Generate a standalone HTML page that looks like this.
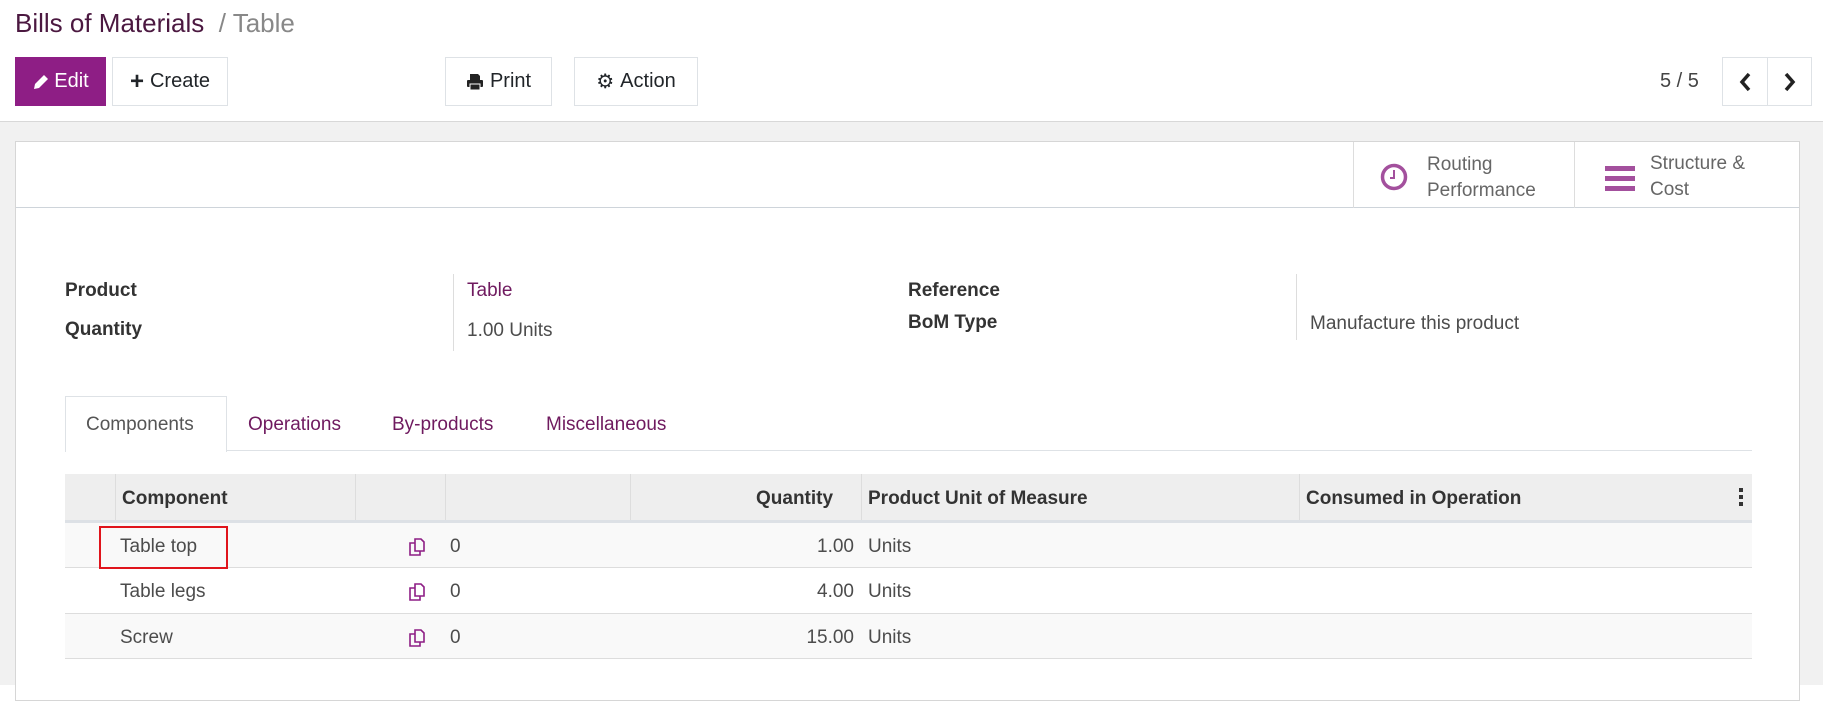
<!DOCTYPE html>
<html><head><meta charset="utf-8"><style>
*{box-sizing:border-box;margin:0;padding:0}
body{width:1823px;height:685px;overflow:hidden;background:#fff;font-family:"Liberation Sans",sans-serif;color:#4c4c4c;font-size:19px;position:relative}
.a{position:absolute}
.btn{position:absolute;top:57px;height:49px;border:1px solid #dee2e6;background:#fff;color:#212529;display:flex;align-items:center;justify-content:center;font-size:20px;gap:6px}
.gray{position:absolute;left:0;top:121px;width:1823px;height:564px;background:#f1f1f1;border-top:1px solid #d8d8d8}
.card{position:absolute;left:15px;top:141px;width:1785px;height:560px;background:#fff;border:1px solid #d6d6d6}
.lbl{font-weight:bold;color:#333}
.purple{color:#6f1a5f}
.q{position:absolute;width:100px;text-align:right;left:738px}
</style></head><body>
<div class="a" style="left:15px;top:8px;font-size:26px;color:#4b1840">Bills of Materials <span style="color:#888">&nbsp;/ Table</span></div>
<div class="btn" style="left:15px;width:91px;background:#8e1e85;border-color:#8e1e85;color:#fff"><svg width="16" height="18"><path d="M2 16l1-5 9-9 4 4-9 9z" fill="#fff"/></svg>Edit</div>
<div class="btn" style="left:112px;width:116px"><b style="font-size:24px">+</b>Create</div>
<div class="btn" style="left:445px;width:107px"><svg width="18" height="18"><path d="M4 1h8l2 2v4H4z" fill="#222"/><rect x="1" y="7" width="16" height="7" rx="1" fill="#222"/><rect x="4" y="11" width="10" height="6" fill="#222" stroke="#fff" stroke-width="1"/></svg>Print</div>
<div class="btn" style="left:574px;width:124px"><span>⚙</span>Action</div>
<div class="a" style="left:1660px;top:70px;font-size:20px;color:#444">5 / 5</div>
<div class="btn" style="left:1722px;width:46px"><svg width="14" height="20"><path d="M11 2L4 10l7 8" fill="none" stroke="#222" stroke-width="3.5"/></svg></div>
<div class="btn" style="left:1767px;width:45px"><svg width="14" height="20"><path d="M3 2l7 8-7 8" fill="none" stroke="#222" stroke-width="3.5"/></svg></div>
<div class="gray"></div>
<div class="card">
 <div class="a" style="left:0;top:0;width:1783px;height:66px;border-bottom:1px solid #ced4da"></div>
 <div class="a" style="left:1337px;top:0;width:222px;height:66px;border-left:1px solid #ddd;border-right:1px solid #ddd"></div>
 <svg class="a" style="left:1364px;top:21px" width="28" height="28"><circle cx="14" cy="14" r="11.5" fill="none" stroke="#a3509d" stroke-width="3.5"/><path d="M14 7v8h-4" fill="none" stroke="#a3509d" stroke-width="2"/></svg>
 <div class="a" style="left:1411px;top:10px;font-size:19px;line-height:26px;color:#666">Routing<br>Performance</div>
 <svg class="a" style="left:1589px;top:24px" width="30" height="26"><rect y="0" width="30" height="5" fill="#a3509d"/><rect y="10" width="30" height="5" fill="#a3509d"/><rect y="20" width="30" height="5" fill="#a3509d"/></svg>
 <div class="a" style="left:1634px;top:9px;font-size:19px;line-height:26px;color:#666">Structure &amp;<br>Cost</div>

 <div class="a lbl" style="left:49px;top:138px">Product</div>
 <div class="a lbl" style="left:49px;top:177px">Quantity</div>
 <div class="a" style="left:437px;top:132px;width:1px;height:77px;background:#ddd"></div>
 <div class="a purple" style="left:451px;top:138px">Table</div>
 <div class="a" style="left:451px;top:178px">1.00 Units</div>
 <div class="a lbl" style="left:892px;top:138px">Reference</div>
 <div class="a lbl" style="left:892px;top:170px">BoM Type</div>
 <div class="a" style="left:1280px;top:132px;width:1px;height:66px;background:#ddd"></div>
 <div class="a" style="left:1294px;top:171px">Manufacture this product</div>

 <div class="a" style="left:49px;top:308px;width:1687px;height:1px;background:#dee2e6"></div>
 <div class="a" style="left:49px;top:254px;width:162px;height:56px;border:1px solid #dee2e6;border-bottom:none;background:#fff"></div>
 <div class="a" style="left:70px;top:272px;color:#555">Components</div>
 <div class="a purple" style="left:232px;top:272px">Operations</div>
 <div class="a purple" style="left:376px;top:272px">By-products</div>
 <div class="a purple" style="left:530px;top:272px">Miscellaneous</div>

 <div class="a" style="left:49px;top:332px;width:1687px;height:49px;background:#eee;border-bottom:3px solid #dde1e6"></div>
 <div class="a" style="left:99px;top:332px;width:1px;height:46px;background:#ddd"></div>
 <div class="a" style="left:339px;top:332px;width:1px;height:46px;background:#ddd"></div>
 <div class="a" style="left:429px;top:332px;width:1px;height:46px;background:#ddd"></div>
 <div class="a" style="left:614px;top:332px;width:1px;height:46px;background:#ddd"></div>
 <div class="a" style="left:845px;top:332px;width:1px;height:46px;background:#ddd"></div>
 <div class="a" style="left:1283px;top:332px;width:1px;height:46px;background:#ddd"></div>
 <div class="a lbl" style="left:106px;top:346px">Component</div>
 <div class="a lbl" style="left:740px;top:346px">Quantity</div>
 <div class="a lbl" style="left:852px;top:346px">Product Unit of Measure</div>
 <div class="a lbl" style="left:1290px;top:346px">Consumed in Operation</div>
 <svg class="a" style="left:1722px;top:345px" width="6" height="20"><rect x="1" y="1" width="4" height="4" fill="#333"/><rect x="1" y="8" width="4" height="4" fill="#333"/><rect x="1" y="15" width="4" height="4" fill="#333"/></svg>

 <div class="a" style="left:49px;top:381px;width:1687px;height:45px;background:#f9f9f9;border-bottom:1px solid #ddd"></div>
 <div class="a" style="left:49px;top:426px;width:1687px;height:46px;background:#fff;border-bottom:1px solid #ddd"></div>
 <div class="a" style="left:49px;top:472px;width:1687px;height:45px;background:#f9f9f9;border-bottom:1px solid #ddd"></div>
 <div class="a" style="left:83px;top:384px;width:129px;height:43px;border:2px solid #e0141c"></div>
 <div class="a" style="left:104px;top:394px">Table top</div>
 <div class="a" style="left:104px;top:439px">Table legs</div>
 <div class="a" style="left:104px;top:485px">Screw</div>
 <div class="a" style="left:434px;top:394px">0</div><div class="a" style="left:434px;top:439px">0</div><div class="a" style="left:434px;top:485px">0</div>
 <div class="q" style="top:394px">1.00</div><div class="q" style="top:439px">4.00</div><div class="q" style="top:485px">15.00</div>
 <div class="a" style="left:852px;top:394px">Units</div><div class="a" style="left:852px;top:439px">Units</div><div class="a" style="left:852px;top:485px">Units</div>
 <svg class="a" style="left:390px;top:395px" width="22" height="22"><g fill="none" stroke="#8e1e85" stroke-width="1.6"><path d="M9 2h6l3 3v9H9z"/><path d="M9 6H4v12h10v-4"/></g></svg>
 <svg class="a" style="left:390px;top:440px" width="22" height="22"><g fill="none" stroke="#8e1e85" stroke-width="1.6"><path d="M9 2h6l3 3v9H9z"/><path d="M9 6H4v12h10v-4"/></g></svg>
 <svg class="a" style="left:390px;top:486px" width="22" height="22"><g fill="none" stroke="#8e1e85" stroke-width="1.6"><path d="M9 2h6l3 3v9H9z"/><path d="M9 6H4v12h10v-4"/></g></svg>
</div>
</body></html>
